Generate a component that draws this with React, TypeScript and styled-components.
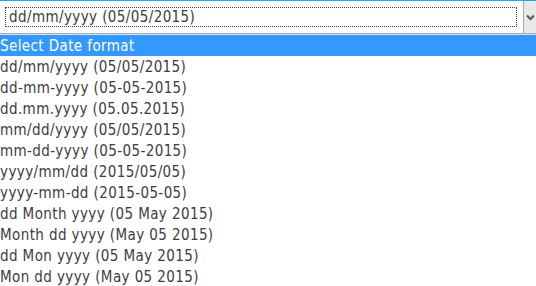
import { FC } from 'react';
import styled, { createGlobalStyle } from 'styled-components';

const GlobalStyle = createGlobalStyle`
  html, body {
    margin: 0;
    padding: 0;
    background: #ffffff;
  }
  body {
    font-family: "DejaVu Sans Condensed", "DejaVu Sans", sans-serif;
    font-size: 15px;
    letter-spacing: 0.4px;
    color: #3d3d3d;
  }
`;

const Frame = styled.div`
  width: 536px;
  height: 286px;
  overflow: hidden;
  display: flex;
  flex-direction: column;
`;

const SelectBox = styled.div`
  display: flex;
  height: 34px;
  flex-shrink: 0;
  box-sizing: border-box;
  border-top: 1px solid #1fa9d8;
  border-bottom: 1px solid #a9a9a9;
  background: #ffffff;
`;

const Field = styled.div`
  flex: 1;
  display: flex;
  align-items: flex-start;
  padding: 6px 6px 0 5px;
`;

const FocusRing = styled.div`
  flex: 1;
  height: 20px;
  box-sizing: border-box;
  border: 1px dotted #444;
  padding-left: 3px;
  line-height: 19px;
`;

const Arrow = styled.div`
  width: 13px;
  box-sizing: border-box;
  border-left: 1px solid #a9a9a9;
  background: #e9e9e9;
  display: flex;
  align-items: center;
  justify-content: center;
`;

const Divider = styled.div`
  height: 1px;
  flex-shrink: 0;
  background: #d8e6f0;
`;

const List = styled.ul`
  list-style: none;
  margin: 0;
  padding: 0;
`;

const Option = styled.li<{ $selected?: boolean }>`
  height: 21px;
  box-sizing: border-box;
  padding-top: 1px;
  line-height: 20px;
  white-space: nowrap;
  background: ${p => (p.$selected ? '#3399ff' : 'transparent')};
  color: ${p => (p.$selected ? '#ffffff' : '#3d3d3d')};
`;

const formats = [
  'dd/mm/yyyy (05/05/2015)',
  'dd-mm-yyyy (05-05-2015)',
  'dd.mm.yyyy (05.05.2015)',
  'mm/dd/yyyy (05/05/2015)',
  'mm-dd-yyyy (05-05-2015)',
  'yyyy/mm/dd (2015/05/05)',
  'yyyy-mm-dd (2015-05-05)',
  'dd Month yyyy (05 May 2015)',
  'Month dd yyyy (May 05 2015)',
  'dd Mon yyyy (05 May 2015)',
  'Mon dd yyyy (May 05 2015)',
];

const Chevron: FC = () => (
  <svg width="9" height="7" viewBox="0 0 9 7">
    <path d="M1 1.5 L4.5 5 L8 1.5" fill="none" stroke="#555" strokeWidth="2" />
  </svg>
);

export default function App() {
  return (
    <>
      <GlobalStyle />
      <Frame>
        <SelectBox>
          <Field>
            <FocusRing>{formats[0]}</FocusRing>
          </Field>
          <Arrow>
            <Chevron />
          </Arrow>
        </SelectBox>
        <Divider />
        <List>
          <Option $selected>Select Date format</Option>
          {formats.map(f => (
            <Option key={f}>{f}</Option>
          ))}
        </List>
      </Frame>
    </>
  );
}
